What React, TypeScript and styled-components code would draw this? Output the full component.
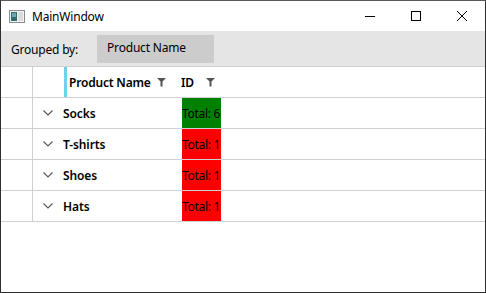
import React from 'react';
import styled, { createGlobalStyle } from 'styled-components';

const GlobalStyle = createGlobalStyle`
  html, body {
    margin: 0;
    padding: 0;
    background: #ffffff;
  }
  body {
    font-family: 'Segoe UI', 'Noto Sans', 'Open Sans', sans-serif;
    font-size: 12px;
    color: #000000;
  }
`;

type Group = { name: string; total: number; ok: boolean };

const groups: Group[] = [
  { name: 'Socks', total: 6, ok: true },
  { name: 'T-shirts', total: 1, ok: false },
  { name: 'Shoes', total: 1, ok: false },
  { name: 'Hats', total: 1, ok: false },
];

const Window = styled.div`
  width: 486px;
  height: 293px;
  box-sizing: border-box;
  border: 1px solid #2f2f2f;
  border-top-color: #5a5a5a;
  display: flex;
  flex-direction: column;
  background: #ffffff;
  overflow: hidden;
`;

const TitleBar = styled.div`
  height: 30px;
  display: flex;
  align-items: center;
  background: #ffffff;
  flex-shrink: 0;
`;

const AppIcon = styled.div`
  width: 16px;
  height: 16px;
  margin-left: 8px;
  margin-right: 7px;
  display: flex;
  align-items: center;
`;

const Title = styled.span`
  flex: 1;
  font-size: 12px;
  letter-spacing: -0.2px;
  color: #000000;
`;

const CaptionButton = styled.div`
  width: 46px;
  height: 30px;
  display: flex;
  align-items: center;
  justify-content: center;
`;

const Toolbar = styled.div`
  height: 35px;
  background: #e5e5e5;
  display: flex;
  align-items: center;
  gap: 19px;
  padding-left: 10px;
  flex-shrink: 0;
`;

const Label = styled.span`
  font-size: 12px;
  letter-spacing: -0.2px;
  padding-top: 2px;
`;

const GroupBox = styled.div`
  width: 117px;
  height: 28px;
  margin-top: 1px;
  box-sizing: border-box;
  background: #cccccc;
  padding-left: 10px;
  display: flex;
  align-items: center;
  font-size: 12px;
  letter-spacing: -0.2px;
  padding-bottom: 3px;
`;

const Grid = styled.div`
  border-top: 1px solid #d0d0d0;
  display: flex;
  flex-direction: column;
`;

const Row = styled.div`
  height: 30px;
  display: flex;
  border-bottom: 1px solid #d0d0d0;
`;

const RowHeader = styled.div`
  width: 31px;
  border-right: 1px solid #d0d0d0;
  flex-shrink: 0;
`;

const HeaderSpacer = styled.div`
  width: 31px;
  flex-shrink: 0;
`;

const Indicator = styled.div`
  width: 3px;
  background: #6dd3ef;
  flex-shrink: 0;
`;

const HeaderCell = styled.div<{ $width: number; $padRight: number }>`
  width: ${(p) => p.$width}px;
  box-sizing: border-box;
  display: flex;
  align-items: center;
  justify-content: space-between;
  padding-left: 2px;
  padding-right: ${(p) => p.$padRight}px;
  font-weight: 600;
  font-size: 12px;
  letter-spacing: -0.2px;
  flex-shrink: 0;
`;

const GroupLabel = styled.div`
  width: 149px;
  display: flex;
  align-items: center;
  padding-left: 10px;
  box-sizing: border-box;
  gap: 10px;
  font-weight: 600;
  font-size: 12px;
  letter-spacing: -0.1px;
  flex-shrink: 0;
`;

const TotalCell = styled.div<{ $ok: boolean }>`
  width: 39px;
  background: ${(p) => (p.$ok ? '#008000' : '#ff0000')};
  display: flex;
  align-items: center;
  font-size: 12px;
  white-space: nowrap;
  overflow: hidden;
  letter-spacing: -0.3px;
  flex-shrink: 0;
`;

const Funnel = () => (
  <svg width="9" height="10" viewBox="0 0 9 10">
    <path d="M0 1 H9 L5.5 4.5 V9.5 H3.5 V4.5 Z" fill="#555555" />
  </svg>
);

const Chevron = () => (
  <svg width="10" height="6" viewBox="0 0 10 6">
    <path d="M0.5 0.5 L5 5 L9.5 0.5" fill="none" stroke="#5a5a5a" strokeWidth="1.2" />
  </svg>
);

export default function App() {
  return (
    <>
      <GlobalStyle />
      <Window>
        <TitleBar>
          <AppIcon>
            <svg width="16" height="13" viewBox="0 0 16 13">
              <rect x="0.5" y="0.5" width="15" height="12" fill="#f4f4f4" stroke="#8a8a8a" />
              <rect x="2" y="2" width="6" height="9" fill="#2f6d6b" />
              <rect x="3" y="3" width="4" height="4" fill="#6fa3b8" />
              <rect x="9" y="2" width="5" height="9" fill="#dcdcdc" />
            </svg>
          </AppIcon>
          <Title>MainWindow</Title>
          <CaptionButton>
            <svg width="10" height="10" viewBox="0 0 10 10">
              <path d="M0 5.5 H10" stroke="#000" strokeWidth="1" />
            </svg>
          </CaptionButton>
          <CaptionButton>
            <svg width="10" height="10" viewBox="0 0 10 10">
              <rect x="0.5" y="0.5" width="9" height="9" fill="none" stroke="#000" strokeWidth="1" />
            </svg>
          </CaptionButton>
          <CaptionButton>
            <svg width="10" height="10" viewBox="0 0 10 10">
              <path d="M0 0 L10 10 M10 0 L0 10" stroke="#000" strokeWidth="1" />
            </svg>
          </CaptionButton>
        </TitleBar>
        <Toolbar>
          <Label>Grouped by:</Label>
          <GroupBox>Product Name</GroupBox>
        </Toolbar>
        <Grid>
          <Row>
            <RowHeader />
            <HeaderSpacer />
            <Indicator />
            <HeaderCell $width={112} $padRight={13}>
              Product Name
              <Funnel />
            </HeaderCell>
            <HeaderCell $width={44} $padRight={8}>
              ID
              <Funnel />
            </HeaderCell>
          </Row>
          {groups.map((g) => (
            <Row key={g.name}>
              <RowHeader />
              <GroupLabel>
                <Chevron />
                {g.name}
              </GroupLabel>
              <TotalCell $ok={g.ok}>Total: {g.total}</TotalCell>
            </Row>
          ))}
        </Grid>
      </Window>
    </>
  );
}
